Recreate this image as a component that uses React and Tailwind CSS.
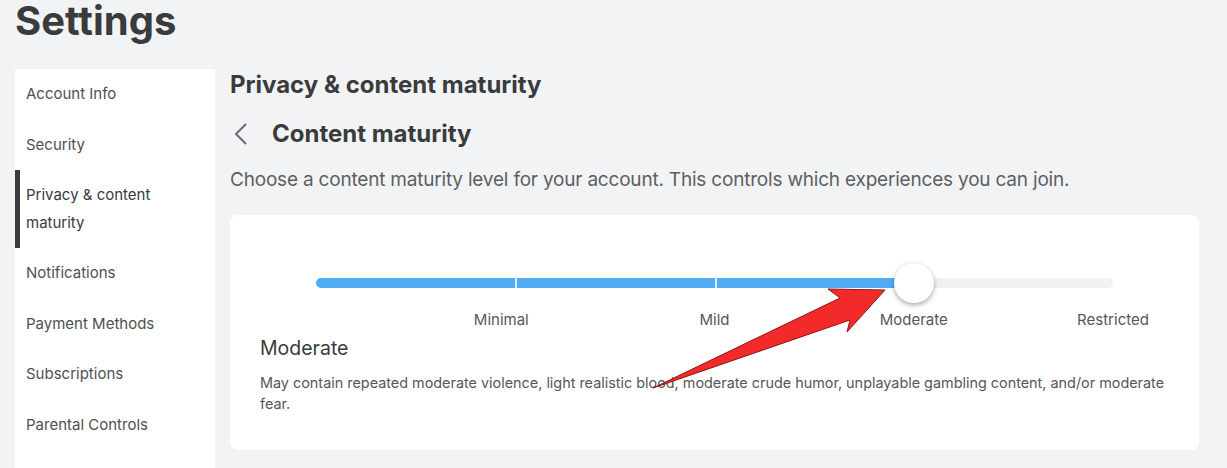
import React from 'react';

const navItems = [
  'Account Info',
  'Security',
  'Privacy & content maturity',
  'Notifications',
  'Payment Methods',
  'Subscriptions',
  'Parental Controls',
];

// label centres along the track (Minimal sits a little left of its tick)
const levels = [
  { label: 'Minimal', pos: 23.25 },
  { label: 'Mild', pos: 50 },
  { label: 'Moderate', pos: 75 },
  { label: 'Restricted', pos: 100 },
];

const Sidebar = () => (
  <nav className="w-[200px] shrink-0 self-stretch bg-white">
    {navItems.map((item) => {
      const active = item.startsWith('Privacy');
      return (
        <div
          key={item}
          className={
            active
              ? 'border-l-[5px] border-[#393b3d] py-[11px] pl-[6px] pr-4 text-[15px] leading-[28px] text-[#393b3d]'
              : 'border-l-[5px] border-transparent py-[11.25px] pl-[6px] pr-4 text-[15px] leading-[28px] text-[#4e5052]'
          }
        >
          {active ? (
            <>
              Privacy &amp; content
              <br />
              maturity
            </>
          ) : (
            item
          )}
        </div>
      );
    })}
  </nav>
);

const MaturitySlider = () => (
  <div className="mx-[56px] pt-[63px]">
    <div className="relative mx-[30px] h-[10px] rounded-full bg-[#f0f1f3]">
      <div className="absolute left-0 top-0 h-full w-[75%] rounded-l-full bg-[#52acf3]" />
      <div className="absolute left-[25%] top-0 h-full w-[2px] bg-[#dcecfb]" />
      <div className="absolute left-[50%] top-0 h-full w-[2px] bg-[#dcecfb]" />
      <div className="absolute left-[75%] top-1/2 h-[40px] w-[40px] -translate-x-1/2 -translate-y-1/2 rounded-full bg-white shadow-[0_2px_5px_rgba(0,0,0,0.35)]" />
    </div>
    <div className="relative mx-[30px] mt-[21px] h-[22px]">
      {levels.map((l) => (
        <span
          key={l.label}
          className="absolute top-0 -translate-x-1/2 whitespace-nowrap text-[15px] leading-[22px] text-[#55575a]"
          style={{ left: `${l.pos}%` }}
        >
          {l.label}
        </span>
      ))}
    </div>
  </div>
);

const Arrow = () => (
  <svg
    className="pointer-events-none absolute left-0 top-0"
    width="1227"
    height="468"
    viewBox="0 0 1227 468"
  >
    <polygon
      points="653,388 840,298 828,289 885,290 847,332 850,320"
      fill="#f32a2a"
      stroke="#8a1a1a"
      strokeWidth="1"
      strokeLinejoin="round"
    />
  </svg>
);

export default function App() {
  return (
    <div
      className="relative h-[468px] w-[1227px] overflow-hidden bg-[#f2f3f5] text-[#393b3d]"
      style={{ fontFamily: 'Inter, "Noto Sans", sans-serif' }}
    >
      <h1 className="pl-[15px] pt-[1px] text-[40px] font-bold leading-[40px] text-[#393b3d]">
        Settings
      </h1>
      <div className="mt-[28px] flex h-[400px] pl-[15px]">
        <Sidebar />
        <main className="flex-1 pl-[15px] pr-[28px]">
          <h2 className="pt-[1px] text-[24px] font-bold leading-[30px]">
            Privacy &amp; content maturity
          </h2>
          <div className="mt-[19px] flex items-center">
            <svg width="16" height="24" viewBox="0 0 16 24" className="ml-[3px] mr-[23px]">
              <path d="M13 2 L3 12 L13 22" fill="none" stroke="#6b6d70" strokeWidth="2" />
            </svg>
            <h3 className="text-[24px] font-bold leading-[30px]">Content maturity</h3>
          </div>
          <p className="mt-[17px] text-[19px] leading-[28px] tracking-[-0.2px] text-[#5d5f62]">
            Choose a content maturity level for your account. This controls which experiences you can join.
          </p>
          <section className="mt-[21px] h-[235px] rounded-lg bg-white">
            <MaturitySlider />
            <div className="px-[30px] pt-[3px]">
              <div className="text-[19.5px] leading-[28px] text-[#393b3d]">Moderate</div>
              <p className="mt-[10px] text-[14.4px] leading-[21px] text-[#55575a]">
                May contain repeated moderate violence, light realistic blood, moderate crude humor, unplayable gambling content, and/or moderate fear.
              </p>
            </div>
          </section>
        </main>
      </div>
      <Arrow />
    </div>
  );
}
